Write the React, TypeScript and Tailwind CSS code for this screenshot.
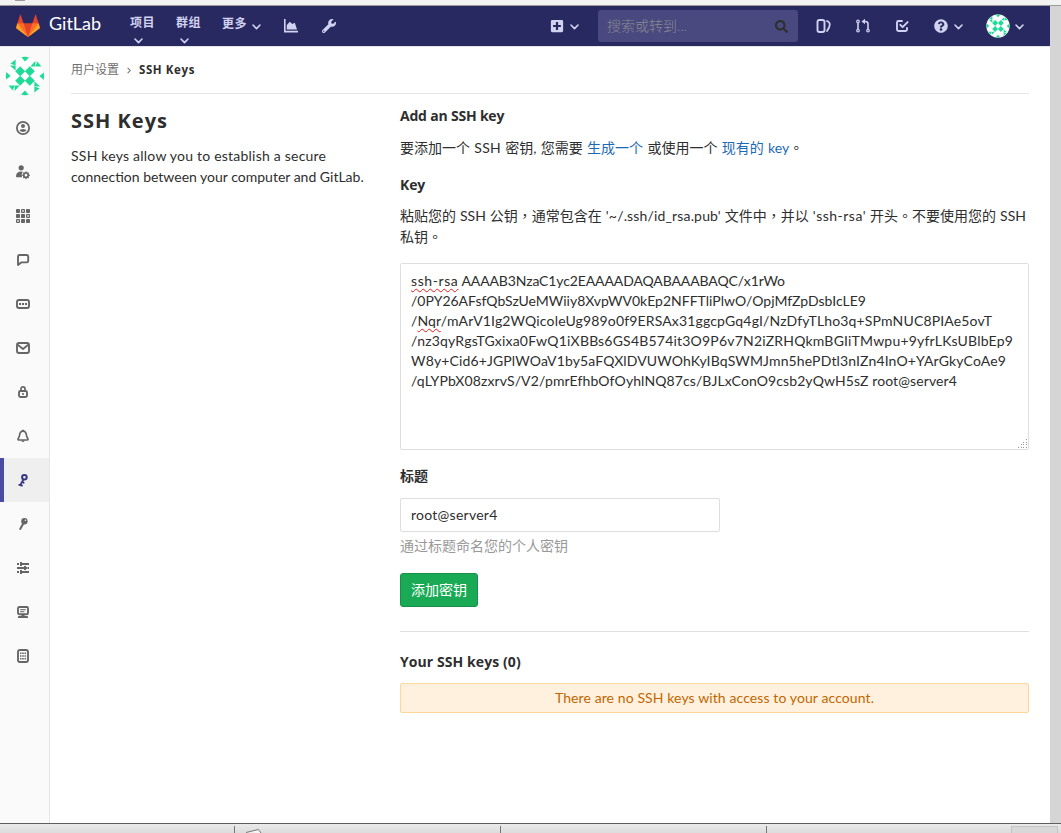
import type { ReactNode } from "react";
import { FaPlusSquare, FaQuestionCircle, FaSearch, FaWrench } from "react-icons/fa";

const LATIN = "font-['Lato','Noto_Sans_CJK_SC',sans-serif]";
const BOLD = "font-['Open_Sans','Noto_Sans_CJK_SC',sans-serif] font-bold";

function Identicon({ className }: { className: string }) {
  return (
    <svg viewBox="0 0 40 40" className={className}>
      <circle cx="20" cy="20" r="19.3" fill="#fff" stroke="#e8e8e8" strokeWidth=".4" />
      <g fill="#1fdb97">
        {[0, 90, 180, 270].map((a) => (
          <g key={a} transform={`rotate(${a} 20 20)`}>
            <path d="M15.2 10.2l5 5-5 5-5-5z" />
            <path d="M5.4 7.8L10.6 3.600v6z" />
            <path d="M4.800 9.600h5.800v5z" />
            <path d="M16.4 1.2Q20 .4 24 1.4l-4 4.2z" />
          </g>
        ))}
      </g>
    </svg>
  );
}

function Tanuki() {
  return (
    <svg viewBox="0 0 36 36" className="h-6 w-6">
      <path fill="#e24329" d="M2 14l9.38 9v-9l-4-12.28c-.205-.632-1.176-.632-1.38 0z" />
      <path fill="#e24329" d="M34 14l-9.38 9v-9l4-12.28c.205-.632 1.176-.632 1.38 0z" />
      <path fill="#e24329" d="M18 34.38L3 14h30z" />
      <path fill="#fc6d26" d="M18 34.38L11.38 14H2l4 11z" />
      <path fill="#fc6d26" d="M18 34.38L24.62 14H34l-4 11z" />
      <path fill="#fca326" d="M2 14L.1 20.16c-.18.565 0 1.2.5 1.56l17.42 12.66z" />
      <path fill="#fca326" d="M34 14l1.9 6.16c.18.565 0 1.2-.5 1.56L18 34.38z" />
    </svg>
  );
}

function Chevron({ className = "" }: { className?: string }) {
  return (
    <svg viewBox="0 0 9 6" className={`h-[6px] w-[9px] shrink-0 ${className}`} fill="none" stroke="currentColor" strokeWidth="1.6" strokeLinecap="round" strokeLinejoin="round">
      <path d="M1 1l3.5 3.6L8 1" />
    </svg>
  );
}

function Svg({ children, className = "h-4 w-4" }: { children: ReactNode; className?: string }) {
  return (
    <svg viewBox="0 0 16 16" className={`shrink-0 ${className}`} fill="none" stroke="currentColor" strokeWidth="2" strokeLinejoin="round" strokeLinecap="round">
      {children}
    </svg>
  );
}

const solid = { fill: "currentColor", stroke: "none" };

const icons: { name: string; art: ReactNode }[] = [
  {
    name: "Profile",
    art: (
      <>
        <circle cx="8" cy="8" r="6.1" strokeWidth="1.8" />
        <circle cx="8" cy="6" r="2" {...solid} />
        <path {...solid} d="M4.6 10.6Q5 9 8 9t3.4 1.6Q10.500 12 8 12t-3.400-1.400z" />
      </>
    ),
  },
  {
    name: "Account",
    art: (
      <>
        <circle cx="6.2" cy="3.800" r="2.600" {...solid} />
        <path {...solid} d="M1 12.800Q1 7.600 5.500 7.400q1.500 0 2.300.4Q6 10 7 13.200H1.600z" />
        <circle cx="11" cy="11.200" r="2.200" strokeWidth="1.700" />
        <path d="M11 7.900v.6M11 13.900v.6M7.800 11.200h.6M13.800 11.200h.4M8.800 9l.3.300M12.900 13.100l.3.300M8.800 13.400l.3-.3M12.900 9.300l.3-.3" strokeWidth="1.500" />
      </>
    ),
  },
  {
    name: "Applications",
    art: (
      <>
        {[0, 1, 2, 3, 4, 5, 6, 7, 8].map((i) => {
          const x = 1 + (i % 3) * 5;
          const y = 1 + Math.floor(i / 3) * 5;
          return [1, 5, 6].includes(i) ? (
            <rect key={i} x={x + 0.6} y={y + 0.6} width="2.8" height="2.8" rx=".4" strokeWidth="1.2" />
          ) : (
            <rect key={i} x={x} y={y} width="4" height="4" rx=".8" {...solid} />
          );
        })}
      </>
    ),
  },
  { name: "Chat", art: <path d="M4.600 3h7.200q1.400 0 1.400 1.400v4.600q0 1.400-1.400 1.400H6.200L3 13V4.400Q3 3 4.600 3z" strokeWidth="1.900" /> },
  {
    name: "Access Tokens",
    art: (
      <>
        <rect x="2" y="4" width="12" height="8" rx="2" strokeWidth="1.900" />
        <path {...solid} d="M4 7h2v2H4zM7 7h2v2H7zM10 7h2v2h-2z" />
      </>
    ),
  },
  {
    name: "Emails",
    art: (
      <>
        <rect x="2" y="3" width="12" height="10" rx="2" strokeWidth="1.900" />
        <path d="M3 5l5 4 5-4" strokeWidth="1.800" />
      </>
    ),
  },
  {
    name: "Password",
    art: (
      <>
        <rect x="4" y="7" width="8" height="6" rx="1.500" strokeWidth="1.900" />
        <path d="M6 6.500V4.800a2 2 0 014 0v1.700" strokeWidth="1.700" />
        <path {...solid} d="M7.200 9h1.600v2H7.200z" />
      </>
    ),
  },
  {
    name: "Notifications",
    art: (
      <>
        <path d="M8 3.200C5.200 3.200 4.600 5.500 4.400 8L3 11.200q0 .8.800.8h8.400q.8 0 .8-.8L11.600 8C11.400 5.500 10.800 3.200 8 3.200z" strokeWidth="1.700" />
        <path {...solid} d="M7 1.800h2V3H7zM6.300 12.500h3.400Q9.300 14 8 14t-1.700-1.500z" />
      </>
    ),
  },
  {
    name: "SSH Keys",
    art: (
      <>
        <circle cx="9.400" cy="5.200" r="2.300" strokeWidth="2" />
        <path d="M8.300 7.600L5.200 13.200M7.200 9.800l1.500.9M5.500 12.800l1.500.8M4.200 12.800h.6" strokeWidth="1.800" />
      </>
    ),
  },
  {
    name: "GPG Keys",
    art: (
      <>
        <circle cx="9.400" cy="5.200" r="3.200" {...solid} />
        <path d="M8.600 7L5.200 12.900" strokeWidth="2" />
        <circle cx="10.400" cy="4.200" r=".7" fill="#fafafa" stroke="none" />
      </>
    ),
  },
  {
    name: "Preferences",
    art: (
      <path {...solid} d="M2 3h2v2H2zM5 2h2v1h7v2H7v1H5zM2 7h7V6h2v1h1v2h-1v1H9V9H2zM12.500 7H14v2h-1.500zM2 11h2v2H2zM5 10h2v1h7v2H7v1H5z" />
    ),
  },
  {
    name: "Active Sessions",
    art: (
      <>
        <rect x="3" y="3" width="10" height="7.200" rx="1.300" strokeWidth="1.900" />
        <path d="M5.500 5.700h5M5.500 7.700h3.500" strokeWidth="1" />
        <path {...solid} d="M6.500 11h3v1H12q1 0 1 1v1H3v-1q0-1 1-1h2.500z" />
      </>
    ),
  },
  {
    name: "Authentication log",
    art: (
      <>
        <rect x="3" y="2" width="10" height="12" rx="2" strokeWidth="1.900" />
        <path {...solid} d="M5 4.500h1.500V6H5zM7.200 4.500h1.600V6H7.200zM9.500 4.500H11V6H9.500zM5 7.200h1.500v1.600H5zM7.200 7.200h1.600v1.600H7.200zM9.500 7.200H11v1.600H9.500zM5 10h1.500v1.500H5zM7.200 10h1.600v1.500H7.200zM9.500 10H11v1.500H9.500z" />
      </>
    ),
  },
];

function NavStack({ label, className }: { label: string; className: string }) {
  return (
    <div className={`flex h-10 flex-col pt-[7px] text-[12px] leading-5 tracking-[0.5px] ${BOLD} ${className}`}>
      <span>{label}</span>
      <Chevron className="ml-1 mt-[5px]" />
    </div>
  );
}

function Navbar() {
  return (
    <header className="flex h-10 w-[1050px] shrink-0 items-center bg-[#292961] text-[#d1d1f0]">
      <div className="ml-4 mt-[-1px]">
        <Tanuki />
      </div>
      <span className={`ml-[9px] mt-[-6px] w-[81px] text-[18px] leading-6 text-white ${LATIN}`}>GitLab</span>
      <NavStack label="项目" className="w-[46px]" />
      <NavStack label="群组" className="w-[46px]" />
      <span className={`mt-[-5px] text-[12px] leading-5 tracking-[0.5px] ${BOLD}`}>更多</span>
      <Chevron className="ml-[5px] mt-[2px]" />
      <svg viewBox="0 0 14 14" className="ml-[23px] h-[14px] w-[14px]" fill="currentColor">
        <path d="M0 0h1.600v11.800H14v1.600H0zM2.800 10.600V6l3-3.300 2.500 2.400 2.500-1.300 2.200 6.800z" />
      </svg>
      <FaWrench className="ml-6 h-[14px] w-[14px]" />
      <FaPlusSquare className="ml-[214px] h-[14px] w-[14px]" />
      <Chevron className="ml-[6px] mt-[2px]" />
      <div className={`ml-[19px] flex h-8 w-[200px] items-center justify-between rounded-[3px] bg-[#494980] pl-[9px] pr-[10px] text-[14px] text-[#8a8a92] ${LATIN}`}>
        <span className="pb-[2px] font-light">搜索或转到...</span>
        <FaSearch className="h-[13px] w-[13px] text-[#2e2e2e]" />
      </div>
      <Svg className="ml-[17px] h-4 w-4">
        <rect x="2.500" y="2" width="7" height="12" rx="2" strokeWidth="1.900" />
        <path d="M12 3q2.800 1 2.800 3.500T12 13" strokeWidth="1.800" />
      </Svg>
      <Svg className="ml-[24px] h-4 w-4">
        <circle cx="3" cy="3.400" r="1.300" strokeWidth="1.200" />
        <circle cx="3" cy="12.600" r="1.300" strokeWidth="1.200" />
        <circle cx="13" cy="12.600" r="1.300" strokeWidth="1.200" />
        <path d="M3 5v6M13 11V5.800Q13 3.500 10.500 3.500H9" strokeWidth="1.600" />
        <path {...solid} d="M6.500 3.500L10 .8v5.400z" />
      </Svg>
      <Svg className="ml-[23px] h-4 w-4">
        <path d="M8 3H4.500Q3 3 3 4.500v7Q3 13 4.500 13h7q1.500 0 1.500-1.500V10M6.300 6.800l2.300 2.300 5-5" strokeWidth="1.900" />
      </Svg>
      <FaQuestionCircle className="ml-[24px] h-[14px] w-[14px]" />
      <Chevron className="ml-[6px] mt-[2px]" />
      <Identicon className="ml-[23px] h-6 w-6" />
      <Chevron className="ml-[5px] mt-[2px]" />
    </header>
  );
}

function Sidebar() {
  return (
    <aside className="flex w-[50px] shrink-0 flex-col border-r border-[#e5e5e5] bg-[#fafafa] text-[#666]">
      <Identicon className="mb-[10px] ml-[5px] mt-[9px] h-10 w-10 shrink-0" />
      {icons.map(({ name, art }) => (
        <div
          key={name}
          className={`flex h-11 shrink-0 items-center ${name === "SSH Keys" ? "border-l-4 border-[#4b4ba3] bg-[#efefef] pl-[11px] text-[#393982]" : "pl-[15px]"}`}
        >
          <Svg>{art}</Svg>
        </div>
      ))}
    </aside>
  );
}

const Mark = ({ children }: { children: string }) => (
  <span className="font-['Noto_Sans_CJK_TC',sans-serif]">{children}</span>
);

const misspelt = "underline decoration-[#e01b1b] decoration-wavy decoration-1 underline-offset-[2px]";

export default function App() {
  return (
    <div className={`flex h-[833px] w-[1061px] flex-col overflow-hidden bg-white text-[14px] text-[#2e2e2e] ${LATIN}`}>
      <div className="h-[6px] shrink-0 border-b border-[#9a9a9a] bg-[#f2f2f2]">
        <div className="ml-[15px] h-[1px] w-[10px] bg-[#9a9a9a]" />
      </div>
      <div className="flex h-[817px] shrink-0 bg-[#d5d5d5]">
        <div className="flex w-[1050px] flex-col bg-white">
          <Navbar />
          <div className="flex min-h-0 flex-1 border-t border-[#e5e5e5]">
            <Sidebar />
            <main className="ml-[21px] w-[958px]">
              <nav className="flex h-[47px] items-center border-b border-[#e5e5e5] text-[12px]">
                <span className="w-[56px] text-[#707070]">用户设置</span>
                <svg viewBox="0 0 5 8" className="mr-[8px] h-[7px] w-[4px]" fill="none" stroke="#707070" strokeWidth="1.300">
                  <path d="M.8.8L4 4 .8 7.200" />
                </svg>
                <span className={`-mt-[1px] text-[11.5px] tracking-[0.6px] ${BOLD}`}>SSH Keys</span>
              </nav>
              <div className="flex">
                <section className="w-[329px] shrink-0">
                  <h4 className={`mt-[14px] text-[20px] leading-[26px] tracking-[1px] ${BOLD}`}>SSH Keys</h4>
                  <p className="mt-[11px] whitespace-nowrap leading-[21px]">
                    <span className="tracking-[0.22px]">SSH keys allow you to establish a secure</span>
                    <br />
                    <span>connection between your computer and GitLab.</span>
                  </p>
                </section>
                <section className="w-[629px]">
                  <h5 className={`mt-[12px] leading-5 tracking-[-0.2px] ${BOLD}`}>Add an SSH key</h5>
                  <p className="mt-[11px] whitespace-nowrap leading-[21px] [word-spacing:0.7px]">
                    要添加一个 <span className="tracking-[0.3px]">SSH</span> 密钥, 您需要 <span className="text-[#1b69b6]">生成一个</span> 或使用一个{" "}
                    <span className="text-[#1b69b6]">现有的 key</span>
                    <Mark>。</Mark>
                  </p>
                  <h5 className={`mt-[17px] leading-5 tracking-[-0.1px] ${BOLD}`}>Key</h5>
                  <p className="mt-[10px] whitespace-nowrap leading-[21px] [word-spacing:0.4px]">
                    粘贴您的 SSH 公钥<Mark>，</Mark>通常包含在 <span className="tracking-[0.16px]">'~/.ssh/id_rsa.pub'</span> 文件中<Mark>，</Mark>并以{" "}
                    <span className="tracking-[0.5px]">'ssh-rsa'</span> 开头<Mark>。</Mark>不要使用您的 SSH
                    <br />
                    私钥<Mark>。</Mark>
                  </p>
                  <div className="relative mt-[16px] h-[187px] whitespace-nowrap rounded-[2px] border border-[#dfdfdf] px-[10px] py-[7px] leading-5">
                    <p>
                      <span className={`tracking-[0.6px] ${misspelt}`}>ssh-rsa</span>
                      <span className="tracking-[-0.12px]"> AAAAB3NzaC1yc2EAAAADAQABAAABAQC/x1rWo</span>
                    </p>
                    <p>/0PY26AFsfQbSzUeMWiiy8XvpWV0kEp2NFFTliPlwO/OpjMfZpDsbIcLE9</p>
                    <p className="tracking-[0.155px]">
                      /<span className={misspelt}>Nqr</span>/mArV1Ig2WQicoleUg989o0f9ERSAx31ggcpGq4gI/NzDfyTLho3q+SPmNUC8PIAe5ovT
                    </p>
                    <p className="tracking-[0.204px]">/nz3qyRgsTGxixa0FwQ1iXBBs6GS4B574it3O9P6v7N2iZRHQkmBGIiTMwpu+9yfrLKsUBlbEp9</p>
                    <p className="tracking-[0.134px]">W8y+Cid6+JGPlWOaV1by5aFQXlDVUWOhKyIBqSWMJmn5hePDtl3nIZn4InO+YArGkyCoAe9</p>
                    <p className="tracking-[0.105px]">/qLYPbX08zxrvS/V2/pmrEfhbOfOyhlNQ87cs/BJLxConO9csb2yQwH5sZ root@server4</p>
                    <svg viewBox="0 0 10 10" className="absolute bottom-0 right-0 h-[10px] w-[10px]" fill="#999">
                      <path d="M8 0h1v1H8zM5 3h1v1H5zM8 3h1v1H8zM3 5h1v1H3zM5 5h1v1H5zM8 5h1v1H8zM0 8h1v1H0zM3 8h1v1H3zM5 8h1v1H5zM8 8h1v1H8z" />
                    </svg>
                  </div>
                  <h5 className={`mt-[16px] leading-5 ${BOLD}`}>标题</h5>
                  <div className="mt-[12px] flex h-[34px] w-[320px] items-center rounded-[2px] border border-[#dfdfdf] px-[10px] pb-[2px] tracking-[0.26px]">root@server4</div>
                  <p className="mt-[4px] leading-5 text-[#999]">通过标题命名您的个人密钥</p>
                  <button className="mt-[17px] flex h-[34px] w-[78px] items-center justify-center rounded-[3px] border border-[#168f48] bg-[#1aaa55] pb-[2px] text-white">添加密钥</button>
                  <hr className="mt-[24px] border-[#e0e0e0]" />
                  <h5 className={`mt-[20px] leading-5 tracking-[0.08px] ${BOLD}`}>Your SSH keys (0)</h5>
                  <div className="mt-[11px] flex h-[30px] items-center justify-center rounded-[2px] border border-[#fdd69b] bg-[#fff1de] pb-[2px] tracking-[0.1px] text-[#c26700]">
                    There are no SSH keys with access to your account.
                  </div>
                </section>
              </div>
            </main>
          </div>
        </div>
      </div>
      <footer className="flex h-[10px] shrink-0 border-t border-[#5e5e5e] bg-linear-to-b from-[#eaeaea] to-[#dcdcdc] pt-[2px]">
        <div className="w-[235px] border-r border-[#777]" />
        <div className="flex w-[266px] items-end border-r border-[#777] pl-[11px]">
          <svg viewBox="0 0 16 4" className="h-1 w-4" fill="#f8f8f8" stroke="#777">
            <path d="M0 3.500L12.500.5 15 4" />
          </svg>
        </div>
        <div className="w-[266px] border-r border-[#777]" />
        <div className="ml-[244px] w-[47px] border-x border-t border-[#c4c4c4] bg-[#d8d8d8]" />
      </footer>
    </div>
  );
}
